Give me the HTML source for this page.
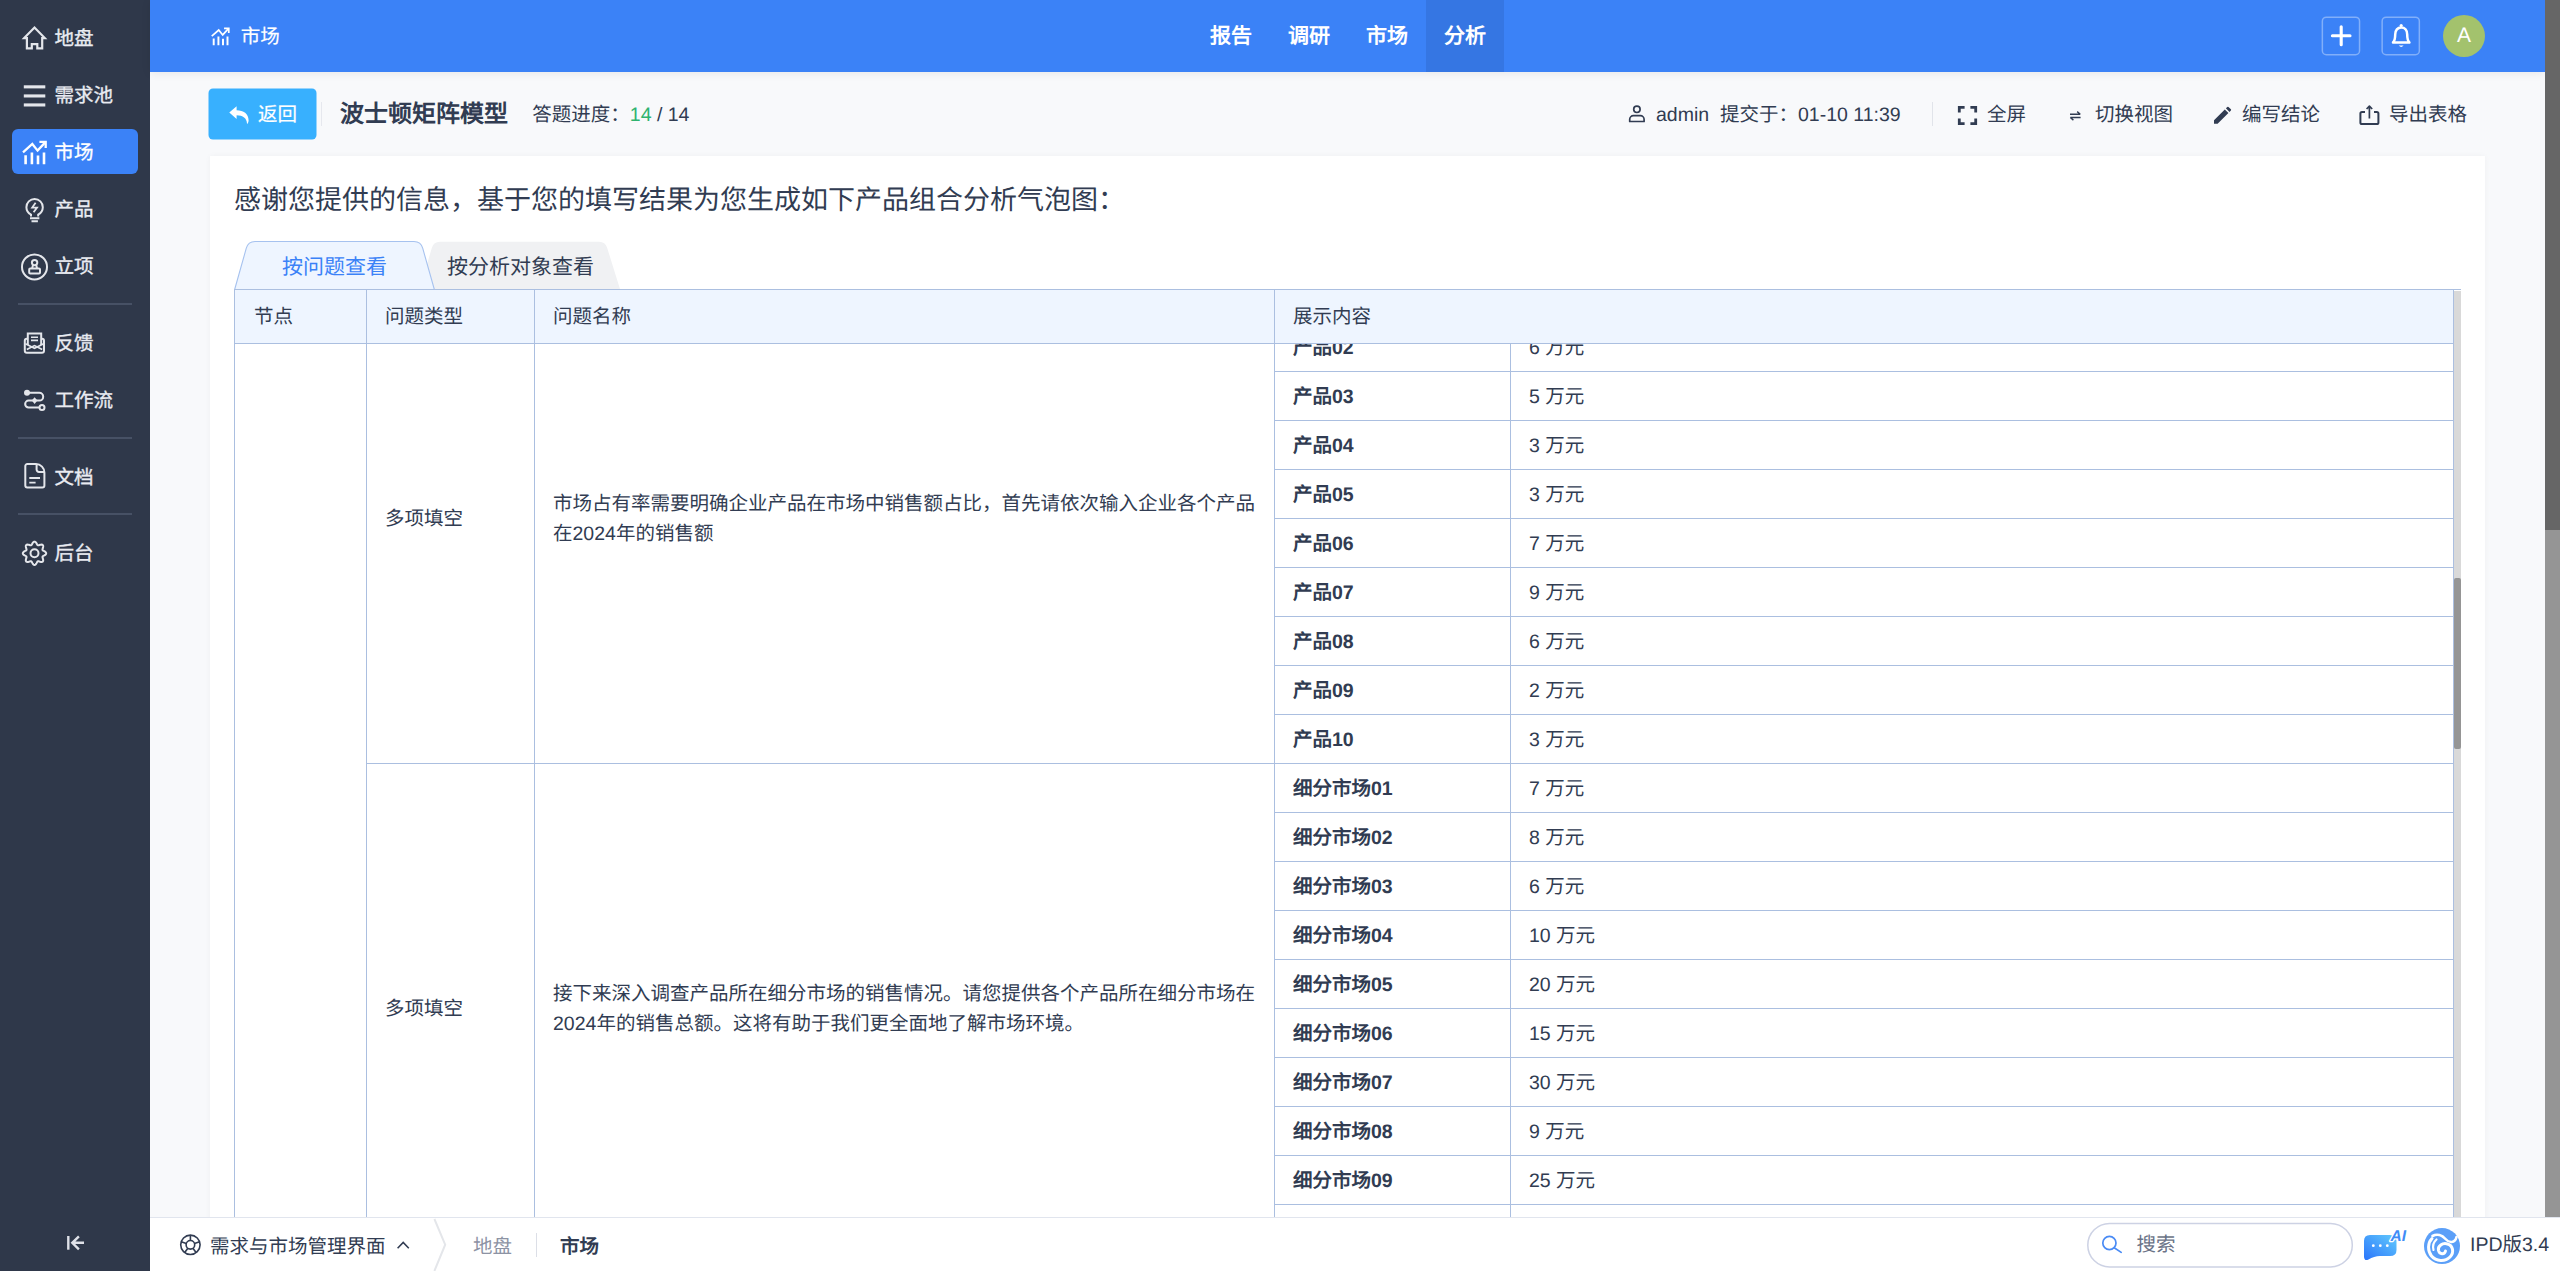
<!DOCTYPE html>
<html lang="zh-CN">
<head>
<meta charset="utf-8">
<title>市场</title>
<style>
*{box-sizing:border-box;margin:0;padding:0}
html,body{width:2560px;height:1271px;overflow:hidden}
body{font-family:"Liberation Sans",sans-serif;text-rendering:geometricPrecision;font-size:19.5px;color:#313c52;background:#f8f9fb;position:relative}
.abs{position:absolute}
svg{display:block;overflow:visible}
/* sidebar */
#side{position:absolute;left:0;top:0;width:150px;height:1271px;background:#2f384a}
.mi{position:absolute;left:12px;width:126px;height:45px;border-radius:6px;color:#e9ebf1;font-size:19.5px;line-height:45px;white-space:nowrap}
.mi.on{background:#3b82f7;color:#fff}
.mi svg{position:absolute;left:10px;top:10.5px;width:24px;height:24px}
.mi span{position:absolute;left:42.5px;top:2px;-webkit-text-stroke:0.35px currentColor}
.sdiv{position:absolute;left:18px;width:114px;height:2px;background:#475165}
/* nav */
#nav{position:absolute;left:150px;top:0;width:2395px;height:72px;background:#3b82f7;box-shadow:0 1px 9px rgba(0,0,0,.08)}
#nav .tab{position:absolute;top:0;height:72px;width:78px;text-align:center;line-height:73px;font-size:21px;font-weight:bold;color:#fff}
#nav .tab.on{background:#3576e3}
/* toolbar */
#tb{position:absolute;left:150px;top:72px;width:2395px;height:84px}
.tbi{position:absolute;top:28px;height:30px;line-height:30px;font-size:19.5px;white-space:nowrap;color:#313c52}
/* panel */
#panel{position:absolute;left:210px;top:156px;width:2275px;height:1115px;background:#fff;box-shadow:0 0 6px rgba(0,0,0,.04)}
/* table */
.hl{position:absolute;height:1px;background:#abbfe0}
.vl{position:absolute;width:1px;background:#abbfe0}
.th{position:absolute;top:291px;height:53px;line-height:53px;font-size:19.5px;color:#313c52;white-space:nowrap}
.lab{position:absolute;left:1293px;font-weight:bold;height:49px;line-height:52px;white-space:nowrap}
.val{position:absolute;left:1529px;height:49px;line-height:52px;white-space:nowrap}
.txt{position:absolute;line-height:30px;font-size:19.5px}
/* bottom */
#bot{position:absolute;left:150px;top:1217px;width:2410px;height:54px;background:#fff;border-top:1px solid #e1e5ee}
.bt{position:absolute;top:13.500px;height:30px;line-height:30px;white-space:nowrap;font-size:19.5px}
</style>
</head>
<body>

<!-- ============ PANEL + TABLE ============ -->
<div id="panel"></div>
<div class="abs" style="left:234px;top:182px;font-size:27px;line-height:36px;white-space:nowrap;color:#313c52">感谢您提供的信息，基于您的填写结果为您生成如下产品组合分析气泡图：</div>

<!-- tabs -->
<svg class="abs" style="left:230px;top:238px" width="400" height="56" viewBox="230 238 400 56">
  <path d="M419.500 290 L431.800 248 Q433.600 241.800 440 241.800 L599 241.800 Q605.400 241.800 607.200 248 L620.300 290 Z" fill="#f0f1f3"/>
  <path d="M234.500 290 L246.300 248.200 Q248.200 241.500 255 241.500 L414 241.500 Q420.800 241.500 422.700 248.200 L434.500 290" fill="#eef5ff" stroke="#a6c2ef" stroke-width="1.100"/>
</svg>
<div class="abs" style="left:282px;top:253px;font-size:21px;line-height:30px;color:#3b82f7;white-space:nowrap">按问题查看</div>
<div class="abs" style="left:447px;top:253px;font-size:21px;line-height:30px;color:#313c52;white-space:nowrap">按分析对象查看</div>

<!-- table body (scrolled content) -->
<div id="tbody" class="abs" style="left:0;top:0;width:2560px;height:1271px">
  <!-- row lines right column -->
  <div class="lab" style="top:322px">产品02</div><div class="val" style="top:322px">6 万元</div>
<div class="hl" style="left:1275px;top:371px;width:1178px"></div>
<div class="lab" style="top:371px">产品03</div><div class="val" style="top:371px">5 万元</div>
<div class="hl" style="left:1275px;top:420px;width:1178px"></div>
<div class="lab" style="top:420px">产品04</div><div class="val" style="top:420px">3 万元</div>
<div class="hl" style="left:1275px;top:469px;width:1178px"></div>
<div class="lab" style="top:469px">产品05</div><div class="val" style="top:469px">3 万元</div>
<div class="hl" style="left:1275px;top:518px;width:1178px"></div>
<div class="lab" style="top:518px">产品06</div><div class="val" style="top:518px">7 万元</div>
<div class="hl" style="left:1275px;top:567px;width:1178px"></div>
<div class="lab" style="top:567px">产品07</div><div class="val" style="top:567px">9 万元</div>
<div class="hl" style="left:1275px;top:616px;width:1178px"></div>
<div class="lab" style="top:616px">产品08</div><div class="val" style="top:616px">6 万元</div>
<div class="hl" style="left:1275px;top:665px;width:1178px"></div>
<div class="lab" style="top:665px">产品09</div><div class="val" style="top:665px">2 万元</div>
<div class="hl" style="left:1275px;top:714px;width:1178px"></div>
<div class="lab" style="top:714px">产品10</div><div class="val" style="top:714px">3 万元</div>
<div class="hl" style="left:367px;top:763px;width:2086px"></div>
<div class="lab" style="top:763px">细分市场01</div><div class="val" style="top:763px">7 万元</div>
<div class="hl" style="left:1275px;top:812px;width:1178px"></div>
<div class="lab" style="top:812px">细分市场02</div><div class="val" style="top:812px">8 万元</div>
<div class="hl" style="left:1275px;top:861px;width:1178px"></div>
<div class="lab" style="top:861px">细分市场03</div><div class="val" style="top:861px">6 万元</div>
<div class="hl" style="left:1275px;top:910px;width:1178px"></div>
<div class="lab" style="top:910px">细分市场04</div><div class="val" style="top:910px">10 万元</div>
<div class="hl" style="left:1275px;top:959px;width:1178px"></div>
<div class="lab" style="top:959px">细分市场05</div><div class="val" style="top:959px">20 万元</div>
<div class="hl" style="left:1275px;top:1008px;width:1178px"></div>
<div class="lab" style="top:1008px">细分市场06</div><div class="val" style="top:1008px">15 万元</div>
<div class="hl" style="left:1275px;top:1057px;width:1178px"></div>
<div class="lab" style="top:1057px">细分市场07</div><div class="val" style="top:1057px">30 万元</div>
<div class="hl" style="left:1275px;top:1106px;width:1178px"></div>
<div class="lab" style="top:1106px">细分市场08</div><div class="val" style="top:1106px">9 万元</div>
<div class="hl" style="left:1275px;top:1155px;width:1178px"></div>
<div class="lab" style="top:1155px">细分市场09</div><div class="val" style="top:1155px">25 万元</div>
<div class="hl" style="left:1275px;top:1204px;width:1178px"></div>
<div class="lab" style="top:1204px">细分市场10</div><div class="val" style="top:1204px">12 万元</div>
<div class="hl" style="left:1275px;top:1253px;width:1178px"></div>
<div class="txt" style="left:385px;top:504px">多项填空</div>
<div class="txt" style="left:553px;top:489px;width:710px">市场占有率需要明确企业产品在市场中销售额占比，首先请依次输入企业各个产品在2024年的销售额</div>
<div class="txt" style="left:385px;top:994px">多项填空</div>
<div class="txt" style="left:553px;top:979px;width:710px">接下来深入调查产品所在细分市场的销售情况。请您提供各个产品所在细分市场在2024年的销售总额。这将有助于我们更全面地了解市场环境。</div>
</div>

<!-- table header -->
<div class="abs" style="left:235px;top:290px;width:2218px;height:53px;background:#eef5ff"></div>
<div class="hl" style="left:234px;top:289px;width:2227px"></div>
<div class="hl" style="left:234px;top:343px;width:2220px"></div>
<div class="th" style="left:254px">节点</div>
<div class="th" style="left:385px">问题类型</div>
<div class="th" style="left:553px">问题名称</div>
<div class="th" style="left:1293px">展示内容</div>
<!-- vertical lines -->
<div class="vl" style="left:234px;top:290px;height:930px"></div>
<div class="vl" style="left:366px;top:290px;height:930px"></div>
<div class="vl" style="left:534px;top:290px;height:930px"></div>
<div class="vl" style="left:1274px;top:290px;height:930px"></div>
<div class="vl" style="left:1510px;top:343px;height:880px"></div>
<div class="vl" style="left:2453px;top:290px;height:930px"></div>
<!-- inner scrollbar -->
<div class="abs" style="left:2454px;top:291px;width:7px;height:927px;background:#d9d9d9"></div>
<div class="abs" style="left:2454px;top:578px;width:7px;height:171px;background:#959595;border-radius:2px"></div>

<!-- ============ SIDEBAR ============ -->
<div id="side">
  <div class="mi" style="top:15px"><svg viewBox="0 0 24 24" fill="none" stroke="#e4e6eb" stroke-width="2.2" stroke-linejoin="miter"><path d="M2.2 12.1 L12.5 1.600 L22.8 12.1 H20.2 V22.4 H15.3 V18.1 H9.8 V22.4 H4.9 V12.1 Z"/></svg><span>地盘</span></div>
  <div class="mi" style="top:72px"><svg viewBox="0 0 24 24" fill="#e4e6eb"><rect x="1.8" y="2.3" width="21.5" height="3.1"/><rect x="1.8" y="11.4" width="21.5" height="3.1"/><rect x="1.8" y="20.4" width="21.5" height="3.1"/></svg><span>需求池</span></div>
  <div class="mi on" style="top:129px"><svg viewBox="0 0 24 24" fill="none" stroke="#fff" stroke-width="2.3"><path d="M1 12.3 L10.3 4 L15.6 10.6 L23 2.6"/><path d="M17.4 1.9 H23.7 V8"/><path d="M3.6 24.3 V15.2 M9.9 24.3 V12.5 M16 24.3 V15.5 M22 24.3 V12.5" stroke-width="2.6"/></svg><span>市场</span></div>
  <div class="mi" style="top:186px"><svg viewBox="0 0 24 24" fill="none" stroke="#e4e6eb" stroke-width="2"><path d="M9 19.6 V17.6 C6.2 16 4.4 13.3 4.4 10.2 A8.2 8.2 0 0 1 20.8 10.2 C20.8 13.3 19 16 16.2 17.6 V19.6"/><path d="M8 21.3 H17.4 M9.5 24.2 H15.9"/><path d="M13.6 5.8 L10.2 10.6 H15 L11.6 15.2" stroke-width="1.8"/></svg><span>产品</span></div>
  <div class="mi" style="top:243px"><svg viewBox="0 0 24 24" fill="none" stroke="#e4e6eb" stroke-width="2"><circle cx="12.5" cy="12.9" r="12.5"/><circle cx="12.6" cy="8.6" r="2.7"/><path d="M11 11 L10.2 14.2 M14.2 11 L15 14.2"/><rect x="7.2" y="14.4" width="10.8" height="5" rx="1"/></svg><span>立项</span></div>
  <div class="sdiv" style="top:303px"></div>
  <div class="mi" style="top:319.5px"><svg viewBox="0 0 24 24" fill="none" stroke="#e4e6eb" stroke-width="2"><path d="M5.2 8.8 H4.8 A2 2 0 0 0 2.8 10.8 V20.8 A2 2 0 0 0 4.8 22.8 H20 A2 2 0 0 0 22 20.8 V10.8 A2 2 0 0 0 20 8.8 H19.8"/><path d="M5.8 15 V3.6 H19.2 V15"/><path d="M9 7.2 H16 M9 10.4 H16" stroke-width="1.6"/><path d="M3.4 13.8 L12.5 18.2 L21.6 13.8 M4.8 19.6 L12.5 15.6 L20.2 19.6" stroke-width="1.7"/></svg><span>反馈</span></div>
  <div class="mi" style="top:376.5px"><svg viewBox="0 0 24 24" fill="none" stroke="#e4e6eb" stroke-width="2"><circle cx="5" cy="5.8" r="3" fill="#e4e6eb" stroke="none"/><path d="M5 5.8 H17.3 A3.9 3.9 0 0 1 17.3 13.6 H6.6 A3.45 3.45 0 0 0 6.6 20.5 H17"/><circle cx="20" cy="20.6" r="2.5"/><path d="M12.6 10.2 L15.4 13.6 L12.6 17 L9.8 13.6 Z" fill="#e4e6eb" stroke="none"/></svg><span>工作流</span></div>
  <div class="sdiv" style="top:437px"></div>
  <div class="mi" style="top:453.5px"><svg viewBox="0 0 24 24" fill="none" stroke="#e4e6eb" stroke-width="2"><path d="M5.3 0.1 H14 C18.8 0.1 22.4 4 22.4 8.6 V21.6 A2 2 0 0 1 20.4 23.6 H5.3 A2 2 0 0 1 3.3 21.6 V2.1 A2 2 0 0 1 5.3 0.1 Z"/><path d="M14.6 0.6 V5.6 A2.4 2.4 0 0 0 17 8 H22"/><path d="M7.3 14 H18 M7.3 18.6 H13.6" stroke-width="1.8"/></svg><span>文档</span></div>
  <div class="sdiv" style="top:513px"></div>
  <div class="mi" style="top:530px"><svg viewBox="0 0 24 24" fill="none" stroke="#e4e6eb" stroke-width="2" stroke-linejoin="round"><path d="M12.50 0.60 L13.07 0.73 L13.60 1.09 L14.08 1.64 L14.49 2.30 L14.84 2.96 L15.15 3.55 L15.47 4.00 L15.83 4.26 L16.27 4.33 L16.81 4.24 L17.45 4.04 L18.17 3.82 L18.92 3.65 L19.64 3.60 L20.28 3.72 L20.77 4.03 L21.08 4.52 L21.20 5.16 L21.15 5.88 L20.98 6.63 L20.76 7.35 L20.56 7.99 L20.47 8.53 L20.54 8.97 L20.80 9.33 L21.25 9.65 L21.84 9.96 L22.50 10.31 L23.16 10.72 L23.71 11.20 L24.07 11.73 L24.20 12.30 L24.07 12.87 L23.71 13.40 L23.16 13.88 L22.50 14.29 L21.84 14.64 L21.25 14.95 L20.80 15.27 L20.54 15.63 L20.47 16.07 L20.56 16.61 L20.76 17.25 L20.98 17.97 L21.15 18.72 L21.20 19.44 L21.08 20.08 L20.77 20.57 L20.28 20.88 L19.64 21.00 L18.92 20.95 L18.17 20.78 L17.45 20.56 L16.81 20.36 L16.27 20.27 L15.83 20.34 L15.47 20.60 L15.15 21.05 L14.84 21.64 L14.49 22.30 L14.08 22.96 L13.60 23.51 L13.07 23.87 L12.50 24.00 L11.93 23.87 L11.40 23.51 L10.92 22.96 L10.51 22.30 L10.16 21.64 L9.85 21.05 L9.53 20.60 L9.17 20.34 L8.73 20.27 L8.19 20.36 L7.55 20.56 L6.83 20.78 L6.08 20.95 L5.36 21.00 L4.72 20.88 L4.23 20.57 L3.92 20.08 L3.80 19.44 L3.85 18.72 L4.02 17.97 L4.24 17.25 L4.44 16.61 L4.53 16.07 L4.46 15.63 L4.20 15.27 L3.75 14.95 L3.16 14.64 L2.50 14.29 L1.84 13.88 L1.29 13.40 L0.93 12.87 L0.80 12.30 L0.93 11.73 L1.29 11.20 L1.84 10.72 L2.50 10.31 L3.16 9.96 L3.75 9.65 L4.20 9.33 L4.46 8.97 L4.53 8.53 L4.44 7.99 L4.24 7.35 L4.02 6.63 L3.85 5.88 L3.80 5.16 L3.92 4.52 L4.23 4.03 L4.72 3.72 L5.36 3.60 L6.08 3.65 L6.83 3.82 L7.55 4.04 L8.19 4.24 L8.73 4.33 L9.17 4.26 L9.53 4.00 L9.85 3.55 L10.16 2.96 L10.51 2.30 L10.92 1.64 L11.40 1.09 L11.93 0.73Z"/><circle cx="12.5" cy="12.3" r="4"/></svg><span>后台</span></div>
</div>

<!-- ============ NAV ============ -->
<div id="nav">
  <svg class="abs" style="left:61.300px;top:27px" width="18" height="18" viewBox="0 0 24 24" fill="none" stroke="#fff" stroke-width="2.3"><path d="M1 12.300 L10.300 4 L15.600 10.600 L23 2.600"/><path d="M17.400 1.900 H23.700 V8"/><path d="M3.600 24.300 V15.200 M9.900 24.300 V12.500 M16 24.300 V15.500 M22 24.300 V12.500" stroke-width="2.6"/></svg>
  <svg class="abs" style="left:2171px;top:16px" width="40" height="40" viewBox="0 0 40 40" fill="none" stroke="#fff" stroke-width="3.1" stroke-linecap="round"><path d="M11.400 19.700 H29 M20.200 10.700 V28.700"/></svg>
  <svg class="abs" style="left:2231px;top:16px" width="40" height="40" viewBox="0 0 40 40" fill="none" stroke="#fff" stroke-width="2.5" stroke-linejoin="round"><path d="M12 26.500 C14 24.500 14.200 22 14.200 18.500 C14.200 14.300 16.600 11.400 20.200 11.400 C23.800 11.400 26.200 14.300 26.200 18.500 C26.200 22 26.400 24.500 28.400 26.500 Z"/><circle cx="20.200" cy="9.600" r="1.600" fill="#fff" stroke="none"/><path d="M17.800 29.600 Q20.200 32.400 22.600 29.600 Z" fill="#fff" stroke="none"/></svg>
  <div class="abs" style="left:90.700px;top:22.200px;font-size:19.5px;line-height:30px;color:#fff;white-space:nowrap;-webkit-text-stroke:0.2px #fff">市场</div>
  <div class="tab" style="left:1042px">报告</div>
  <div class="tab" style="left:1120px">调研</div>
  <div class="tab" style="left:1198px">市场</div>
  <div class="tab on" style="left:1276px">分析</div>
  <svg class="abs" style="left:2170px;top:14px" width="104" height="44" viewBox="2320 14 104 44" fill="none" stroke="rgba(255,255,255,.36)" stroke-width="1.500"><rect x="2322.350" y="17.150" width="37.200" height="37.500" rx="4"/><rect x="2382.150" y="17.150" width="37.200" height="37.500" rx="4"/></svg>
  
  <div class="abs" style="left:2293px;top:15px;width:42px;height:42px;border-radius:50%;background:#a3c26d;color:#fff;text-align:center;line-height:42px;font-size:21px">A</div>
</div>

<!-- ============ TOOLBAR ============ -->
<div id="tb">
  <svg class="abs" style="left:58px;top:16px" width="110" height="53" viewBox="0 0 110 53"><rect x="0.500" y="0.500" width="108" height="51" rx="4.500" fill="#38b0fe"/></svg>
  <svg class="abs" style="left:78.5px;top:33.500px" width="21" height="18" viewBox="0 0 21 18" fill="#fff"><path d="M0.300 6.600 L7.600 0.200 V4.200 C14.500 4.300 19.600 7.600 19.600 14.200 C19.600 15.500 19.300 16.700 18.700 17.600 C18.500 17.900 18 17.800 18 17.400 C17.700 12.200 14 9.400 7.600 9.300 V13.100 Z"/></svg>
  <svg class="abs" style="left:1478px;top:32px" width="18" height="19" viewBox="0 0 18 19" fill="none" stroke="#313c52" stroke-width="1.7"><circle cx="8.900" cy="5.300" r="3.200"/><path d="M1.700 17.500 V15.400 C1.700 13.300 3.400 11.700 5.400 11.700 H12.400 C14.400 11.700 16.100 13.300 16.100 15.400 V17.500 Z" stroke-linejoin="round"/></svg>
  <svg class="abs" style="left:1807px;top:33px" width="21" height="21" viewBox="0 0 21 21" fill="none" stroke="#313c52" stroke-width="2.8"><path d="M2.300 7.600 V2.300 H7.600 M13.400 2.300 H18.700 V7.600 M18.700 13.400 V18.700 H13.400 M7.600 18.700 H2.300 V13.400"/></svg>
  <svg class="abs" style="left:1919px;top:38.600px" width="12.600" height="9.800" viewBox="0 0 15 12" fill="none" stroke="#313c52" stroke-width="1.700"><path d="M1 4 H13.600 M9.800 0.800 L13.600 4 M14 8 H1.400 M5.200 11.200 L1.400 8" stroke-linejoin="round"/></svg>
  <svg class="abs" style="left:2063px;top:34px" width="19" height="19" viewBox="0 0 19 19" fill="#313c52"><path d="M1 14.200 L11.800 3.400 L15.400 7 L4.600 17.800 H1 Z M12.900 2.300 L14.300 0.900 Q14.900 0.400 15.500 0.900 L17.900 3.300 Q18.400 3.900 17.900 4.500 L16.500 5.900 Z"/></svg>
  <svg class="abs" style="left:2208px;top:32px" width="22" height="22" viewBox="0 0 22 22" fill="none" stroke="#313c52" stroke-width="2" stroke-linejoin="round"><path d="M7 8 H4 A1.600 1.600 0 0 0 2.400 9.600 V18.400 A1.600 1.600 0 0 0 4 20 H18.800 A1.600 1.600 0 0 0 20.400 18.400 V9.600 A1.600 1.600 0 0 0 18.800 8 H16"/><path d="M11.400 14.600 V2.400 M8.600 5 L11.400 2.200 L14.200 5" stroke-width="1.700"/></svg>
  <div class="tbi" style="left:108px;color:#fff;-webkit-text-stroke:0.2px #fff">返回</div>
  <div class="abs" style="left:171px;top:30px;width:1px;height:24px;background:#e6e8ee"></div>
  <div class="tbi" style="left:190px;font-size:24px;font-weight:bold;top:28px">波士顿矩阵模型</div>
  <div class="tbi" style="left:382.300px">答题进度：<span style="color:#2fb36f">14</span> / 14</div>
  <div class="tbi" style="left:1506px">admin&nbsp;&nbsp;提交于：01-10 11:39</div>
  <div class="abs" style="left:1782px;top:30px;width:1px;height:24px;background:#e1e4ea"></div>
  <div class="tbi" style="left:1837px">全屏</div>
  <div class="tbi" style="left:1945px">切换视图</div>
  <div class="tbi" style="left:2092px">编写结论</div>
  <div class="tbi" style="left:2239px">导出表格</div>
</div>

<!-- page scrollbar -->
<div class="abs" style="left:2545px;top:0;width:15px;height:1218px;background:#959595"></div>
<div class="abs" style="left:2545px;top:0;width:15px;height:530px;background:#666"></div>

<!-- ============ BOTTOM BAR ============ -->
<div id="bot">
  <div class="bt" style="left:60px">需求与市场管理界面</div>
  <div class="bt" style="left:323px;color:#8d93a4">地盘</div>
  <div class="abs" style="left:386px;top:15px;width:1px;height:24px;background:#dcdfe7"></div>
  <div class="bt" style="left:410px;font-weight:bold">市场</div>
  <svg class="abs" style="left:1936px;top:3px" width="270" height="48" viewBox="0 0 270 48"><rect x="1.800" y="2.400" width="264.500" height="43.500" rx="21.750" fill="#fff" stroke="#cdd2e4" stroke-width="1.500"/></svg>
  <div class="bt" style="left:1986.500px;top:12px;color:#6b7387">搜索</div>
  <div class="bt" style="left:2320px;top:12.200px">IPD版3.4</div>
</div>

<svg class="abs" style="left:0;top:1211px" width="2560" height="60" viewBox="0 1211 2560 60" fill="none">
  <g stroke="#dfe1e8" stroke-width="2.400" stroke-linecap="butt"><path d="M68.300 1236 V1249.700"/><path d="M84 1242.800 H72.500 M78.900 1236.400 L72.300 1242.800 L78.900 1249.300" stroke-linejoin="miter"/></g>
  <g stroke="#313c52" stroke-width="1.600"><circle cx="190.400" cy="1244.800" r="9.700"/><circle cx="190.400" cy="1244.800" r="4.300"/><path d="M190.400 1235.100 V1240.500 M199.600 1241.800 L194.500 1243.500 M196.100 1252.600 L192.900 1248.300 M184.700 1252.600 L187.900 1248.300 M181.200 1241.800 L186.300 1243.500"/></g>
  <path d="M397.600 1248.200 L403.200 1242.500 L408.800 1248.200" stroke="#313c52" stroke-width="1.600"/>
  <path d="M434.400 1219 L445.200 1244.700 L434.400 1271" stroke="#e4e6ea" stroke-width="2"/>
  <defs><linearGradient id="aig" x1="0" y1="1" x2="1" y2="0"><stop offset="0" stop-color="#2a74fb"/><stop offset="1" stop-color="#62cbfd"/></linearGradient></defs>
  <path d="M2364 1241 Q2364 1235 2370 1235 H2390 Q2396.500 1235 2396.500 1241 V1250 Q2396.500 1256 2390 1256 H2380 Q2374 1256 2368.500 1259.500 Q2364.500 1261.500 2364 1257 Z" fill="url(#aig)"/>
  <circle cx="2373.300" cy="1245.700" r="1.400" fill="#fff"/><circle cx="2380.300" cy="1245.700" r="1.400" fill="#fff"/><circle cx="2387.300" cy="1245.700" r="1.400" fill="#fff"/>
  <text x="2390.500" y="1241.300" font-family="Liberation Sans, sans-serif" font-size="15.500" font-style="italic" font-weight="bold" fill="#3f8cf7" stroke="#fff" stroke-width="2.600" paint-order="stroke" stroke-linejoin="round">AI</text>
  <circle cx="2442" cy="1246.100" r="18" fill="#5b9ff8"/>
  <g stroke="#fff" fill="none" stroke-linecap="round">
    <path d="M2456.500 1237 C2455 1243.500 2449 1243 2445.500 1239 C2442 1235 2437 1233.500 2432.500 1236" stroke-width="2.600"/>
    <path d="M2432 1238.500 C2427.500 1243 2427.500 1251 2431.500 1256 C2436 1261.500 2445 1262 2450 1257 C2454.500 1252.500 2453 1245.500 2447.500 1244 C2442.500 1242.500 2437.500 1246 2438.500 1250.500 C2439.500 1254.500 2444.500 1255 2445.500 1251" stroke-width="3"/>
    <path d="M2436.500 1239.500 C2433.500 1242 2432.500 1246 2433.500 1250" stroke-width="2.200"/>
  </g>
  <g stroke="#4a8bf5" stroke-width="1.700" stroke-linecap="round"><circle cx="2109.400" cy="1243" r="6.600"/><path d="M2114.200 1247.800 L2121.200 1252.400"/></g>
</svg>
</body>
</html>
